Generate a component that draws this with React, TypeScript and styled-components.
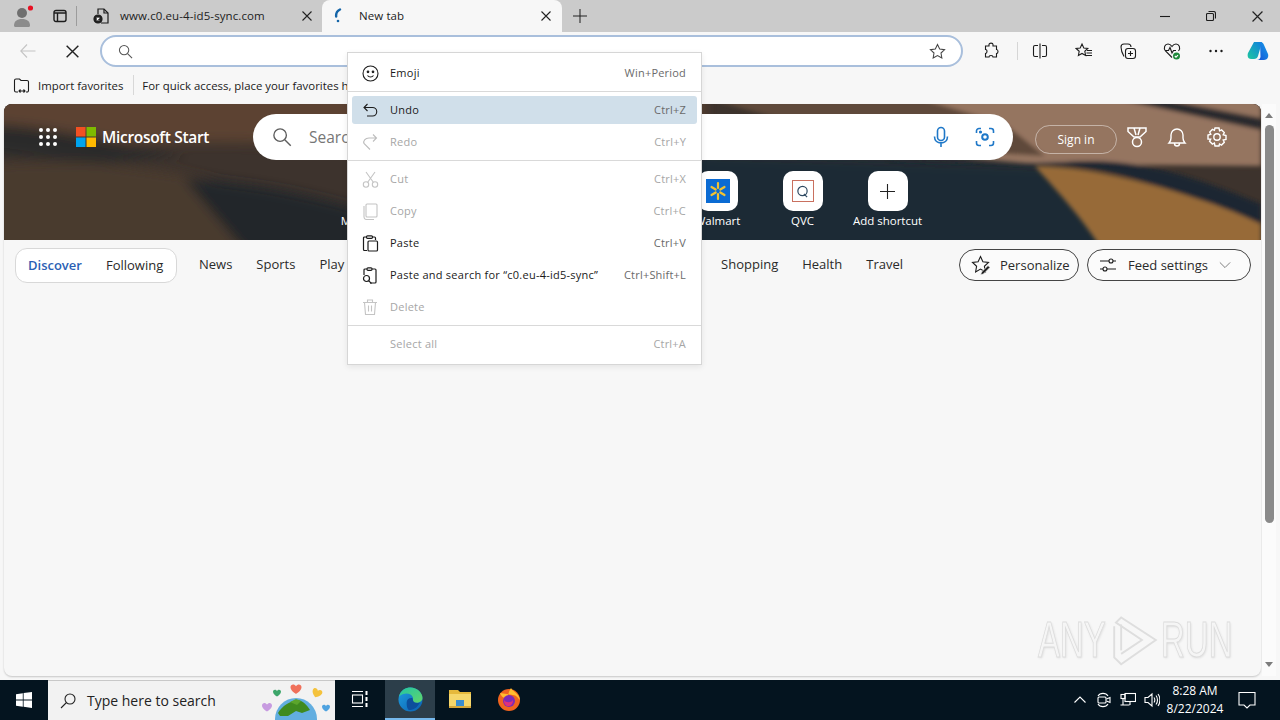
import { createGlobalStyle } from "styled-components"
import styled from "styled-components"

const Global = createGlobalStyle`
  html, body { margin: 0; padding: 0; background: #f7f7f7; }
  * { box-sizing: border-box; }
  body { font-family: "Open Sans", "Liberation Sans", sans-serif; }
`

const Screen = styled.div`
  position: relative;
  width: 1280px;
  height: 720px;
  display: flex;
  flex-direction: column;
  overflow: hidden;
  background: #f7f7f7;
  color: #1a1a1a;
`

const Glyph = styled.svg.attrs<{ $s?: number }>((p) => ({ width: p.$s ?? 16, height: p.$s ?? 16 }))<{ $s?: number; $c?: string }>`
  flex: none;
  display: block;
  color: ${(p) => p.$c ?? "#1c1c1c"};
  fill: none;
  stroke: currentColor;
  stroke-width: 1.1;
`

/* title bar */
const TabStrip = styled.div`
  height: 32px;
  flex: none;
  display: flex;
  align-items: stretch;
  background: #cbcbcb;
`

const Slot = styled.div<{ $w: number }>`
  width: ${(p) => p.$w}px;
  flex: none;
  display: flex;
  align-items: center;
  justify-content: center;
`

const StripDivider = styled.div`
  width: 1px;
  height: 20px;
  margin: 6px 7px 0 0;
  background: #9c9c9c;
`

const Tab = styled.div<{ $active?: boolean }>`
  width: ${(p) => (p.$active ? 240 : 238)}px;
  flex: none;
  display: flex;
  align-items: center;
  padding: 0 ${(p) => (p.$active ? 11 : 10)}px 1px 9px;
  font-size: 11.5px;
  letter-spacing: 0.1px;
  background: ${(p) => (p.$active ? "#f7f7f7" : "transparent")};
  border-radius: 8px 8px 0 0;
`

const TabTitle = styled.span<{ $left: number }>`
  flex: 1;
  margin-left: ${(p) => p.$left}px;
  padding-bottom: 1px;
  white-space: nowrap;
  color: #222;
`

const WindowButtons = styled.div`
  margin-left: auto;
  display: flex;
`

/* address bar */
const Toolbar = styled.div`
  height: 38px;
  flex: none;
  display: flex;
  align-items: center;
  padding-left: 6px;
  background: #f7f7f7;
`

const AddressBar = styled.div`
  width: 863px;
  height: 32px;
  margin: 0 6px 0 6px;
  flex: none;
  display: flex;
  align-items: center;
  justify-content: space-between;
  padding: 0 15px 0 16px;
  background: #fff;
  border: 2px solid #a9bfdc;
  border-radius: 16px;
`

const ToolDivider = styled.div`
  width: 1px;
  height: 18px;
  margin-left: 4px;
  background: #d6d6d6;
`

/* favorites bar */
const FavBar = styled.div`
  height: 32px;
  flex: none;
  display: flex;
  align-items: center;
  padding: 0 0 2px 13px;
  font-size: 11.4px;
  background: #f7f7f7;
  white-space: nowrap;
`

const FavImport = styled.span`
  margin-left: 8px;
  color: #222;
`

const FavDivider = styled.div`
  width: 1px;
  height: 20px;
  margin: 0 8px 0 10px;
  background: #d8d8d8;
`

/* page */
const Viewport = styled.div`
  flex: 1;
  min-height: 0;
  display: flex;
  padding: 2px 4px 4px 4px;
`

const Page = styled.div`
  width: 1257px;
  flex: none;
  display: flex;
  flex-direction: column;
  background: #f7f7f7;
  border-radius: 8px;
  box-shadow: 0 1px 2px rgba(0, 0, 0, 0.2);
  overflow: hidden;
`

const Hero = styled.div`
  position: relative;
  height: 136px;
  flex: none;
  padding-top: 10px;
  overflow: hidden;
  background: #3a3330;
`

const HeroArt = styled.svg`
  position: absolute;
  inset: 0;
  width: 100%;
  height: 100%;
`

const HeroTop = styled.div`
  position: relative;
  display: flex;
  align-items: center;
  height: 46px;
  padding-left: 34px;
`

const Brand = styled.div`
  display: flex;
  align-items: center;
  width: 177px;
  margin-left: 18px;
  flex: none;
  font-size: 15.5px;
  font-weight: 600;
  color: #fff;
  white-space: nowrap;
`

const BrandName = styled.span`
  margin-left: 6px;
  letter-spacing: -0.3px;
`

const SearchBox = styled.div`
  width: 760px;
  height: 46px;
  flex: none;
  display: flex;
  align-items: center;
  padding: 0 6px 0 19px;
  background: #fff;
  border-radius: 23px;
`

const SearchHint = styled.span`
  margin-left: 17px;
  flex: 1;
  font-size: 15.5px;
  color: #767676;
`

const SignIn = styled.div`
  width: 82px;
  height: 29px;
  margin: 4px 0 0 22px;
  flex: none;
  display: flex;
  align-items: center;
  justify-content: center;
  font-size: 12px;
  color: #fff;
  border: 1px solid rgba(255, 255, 255, 0.45);
  border-radius: 15px;
`

const HeroIcons = styled.div`
  display: flex;
`

const Shortcuts = styled.div`
  position: relative;
  display: flex;
  margin-top: 11px;
  padding-left: 331px;
`

const Shortcut = styled.div`
  width: 85px;
  flex: none;
  display: flex;
  flex-direction: column;
  align-items: center;
  font-size: 11.5px;
  color: #fff;
  white-space: nowrap;
`

const Tile = styled.div`
  width: 40px;
  height: 40px;
  display: flex;
  align-items: center;
  justify-content: center;
  margin-bottom: 2px;
  background: #fff;
  border-radius: 10px;
`

const QvcMark = styled.div`
  width: 22px;
  height: 22px;
  display: flex;
  align-items: center;
  justify-content: center;
  border: 1px solid #c9705f;
`

const NavRow = styled.div`
  display: flex;
  align-items: flex-start;
  padding: 8px 10px 0 11px;
  font-size: 13px;
  color: #2a2a2a;
`

const FeedPill = styled.div`
  width: 162px;
  height: 35px;
  flex: none;
  display: flex;
  align-items: center;
  padding-left: 12px;
  gap: 24px;
  margin-right: 22px;
  background: #fff;
  border: 1px solid #d8d8d8;
  border-radius: 12px;
`

const NavLink = styled.span<{ $on?: boolean }>`
  line-height: 33px;
  white-space: nowrap;
  margin-right: ${(p) => (p.$on === undefined ? "24px" : "0")};
  color: ${(p) => (p.$on ? "#2b5fb4" : "#2a2a2a")};
  font-weight: ${(p) => (p.$on ? 600 : 400)};
`

const NavGap = styled.div<{ $w?: number }>`
  flex: ${(p) => (p.$w ? `0 0 ${p.$w}px` : "1")};
`

const OutlineButton = styled.div<{ $w: number; $gap: number }>`
  width: ${(p) => p.$w}px;
  height: 32px;
  flex: none;
  display: flex;
  align-items: center;
  margin: 1px 0 0 8px;
  padding-left: 11px;
  gap: ${(p) => p.$gap}px;
  font-size: 13px;
  background: #fbfbfb;
  border: 1px solid #444;
  border-radius: 16px;
  white-space: nowrap;
`

const Scrollbar = styled.div`
  width: 14px;
  margin-left: 1px;
  flex: none;
  display: flex;
  flex-direction: column;
  align-items: center;
  background: #fbfbfb;
`

const Arrow = styled.div<{ $down?: boolean }>`
  width: 0;
  height: 0;
  flex: none;
  margin: ${(p) => (p.$down ? "auto 0 9px" : "9px 0 0")};
  border-left: 4px solid transparent;
  border-right: 4px solid transparent;
  border-${(p) => (p.$down ? "top" : "bottom")}: 5px solid #7c7c7c;
`

const Thumb = styled.div`
  width: 9px;
  height: 398px;
  margin-top: 7px;
  background: #8a8a8a;
  border-radius: 5px;
`

/* taskbar */
const Taskbar = styled.div`
  height: 40px;
  flex: none;
  display: flex;
  align-items: stretch;
  background: #04141f;
  color: #fff;
`

const TaskSearch = styled.div`
  width: 287px;
  flex: none;
  display: flex;
  align-items: center;
  padding-left: 12px;
  overflow: hidden;
  background: #f2f2f2;
  border-top: 1px solid #c8c8c8;
  color: #222;
  font-size: 14px;
`

const TaskSearchText = styled.span`
  margin-left: 11px;
  flex: 1;
  white-space: nowrap;
`

const TaskItem = styled.div<{ $on?: boolean; $w?: number }>`
  width: ${(p) => p.$w ?? 49}px;
  flex: none;
  display: flex;
  align-items: center;
  justify-content: center;
  background: ${(p) => (p.$on ? "#2c3e4a" : "transparent")};
  border-bottom: 2px solid ${(p) => (p.$on ? "#76b9ed" : "transparent")};
`

const Tray = styled.div`
  margin-left: auto;
  display: flex;
  align-items: center;
  padding-right: 12px;
`

const TraySlot = styled.div<{ $w: number }>`
  width: ${(p) => p.$w}px;
  flex: none;
  display: flex;
  justify-content: center;
`

const Clock = styled.div`
  width: 62px;
  flex: none;
  text-align: center;
  font-size: 12px;
  line-height: 18px;
  white-space: nowrap;
`

const Notify = styled.div`
  width: 42px;
  flex: none;
  display: flex;
  justify-content: center;
`

/* context menu */
const Menu = styled.div`
  position: absolute;
  left: 347px;
  top: 52px;
  width: 355px;
  display: flex;
  flex-direction: column;
  padding: 4px 0 2px;
  background: #fff;
  border: 1px solid #d6d6d6;
  box-shadow: 0 2px 6px rgba(0, 0, 0, 0.08);
`

const MenuGroup = styled.div`
  display: flex;
  flex-direction: column;
  &:last-child {
    padding-bottom: 2px;
  }
`

const MenuRow = styled.div<{ $off?: boolean; $hot?: boolean }>`
  height: 28px;
  margin: 2px 4px;
  flex: none;
  display: flex;
  align-items: center;
  padding: 0 11px 0 8px;
  font-size: 11px;
  border-radius: 3px;
  white-space: nowrap;
  background: ${(p) => (p.$hot ? "#d0dfea" : "transparent")};
  color: ${(p) => (p.$off ? "#a6a6a6" : "#1a1a1a")};
`

const MenuIcon = styled.div`
  width: 20px;
  flex: none;
  display: flex;
  justify-content: center;
`

const MenuLabel = styled.span`
  margin-left: 10px;
  padding-bottom: 2px;
  flex: 1;
  letter-spacing: 0.25px;
`

const MenuKeys = styled.span<{ $off?: boolean }>`
  padding-bottom: 2px;
  letter-spacing: 0.2px;
  color: ${(p) => (p.$off ? "#a6a6a6" : "#6a6a6a")};
`

const MenuLine = styled.div`
  height: 1px;
  margin: 2px 0;
  flex: none;
  background: #d9d9d9;
`

const Watermark = styled.div`
  position: absolute;
  left: 1038px;
  top: 611px;
  display: flex;
  align-items: center;
  font-family: "Liberation Sans", sans-serif;
  font-size: 50px;
  color: rgba(246, 246, 246, 0.9);
  -webkit-text-stroke: 1px #dcdcdc;
  text-shadow: 1px 1px 3px rgba(0, 0, 0, 0.12);
  pointer-events: none;
`

const WatermarkWord = styled.span<{ $w: number }>`
  width: ${(p) => p.$w}px;
  display: inline-block;
  transform: scaleX(0.66);
  transform-origin: left center;
  white-space: nowrap;
`

/* ---- drawings ---- */
const Search = ({ s = 16, c = "#444" }: { s?: number; c?: string }) => (
  <Glyph $s={s} $c={c} viewBox="0 0 16 16">
    <circle cx="6.5" cy="6.5" r="5" />
    <path d="M10.2 10.2L15 15" />
  </Glyph>
)

const CloseX = ({ s = 10, c = "#222" }: { s?: number; c?: string }) => (
  <Glyph $s={s} $c={c} viewBox="0 0 10 10">
    <path d="M.5.5l9 9M9.5.5l-9 9" />
  </Glyph>
)

const Star = () => (
  <Glyph $s={17} $c="#444" viewBox="0 0 18 18">
    <path d="M9 1.5l2.3 4.8 5.2.7-3.8 3.6.9 5.2L9 13.3l-4.6 2.5.9-5.2L1.5 7l5.2-.7z" />
  </Glyph>
)

const Avatar = () => (
  <Glyph $s={22} viewBox="0 0 22 22">
    <circle cx="11" cy="8" r="5" fill="#6f6f6f" stroke="none" />
    <path d="M3 21c0-5 3-7 8-7s8 2 8 7c0 1-2 1-3 1H6c-1 0-3 0-3-1z" fill="#8c8c8c" stroke="none" />
    <circle cx="19.5" cy="3" r="2.6" fill="#e81123" stroke="none" />
  </Glyph>
)

const TabsIcon = () => (
  <Glyph $s={14} viewBox="0 0 14 14" style={{ strokeWidth: 1.4 }}>
    <rect x="1" y="1.5" width="12" height="11" rx="2" />
    <path d="M1 4h12M4.5 4v8.5" />
  </Glyph>
)

const PageFavicon = () => (
  <Glyph $s={18} viewBox="0 0 18 18" style={{ strokeWidth: 1.2 }}>
    <path d="M5 7V2h6l4 4v10H8" />
    <path d="M11 2v4h4" />
    <circle cx="5" cy="12" r="4" fill="#222" />
    <path d="M3.7 10.7l2.6 2.6M6.3 10.7l-2.6 2.6" stroke="#fff" />
  </Glyph>
)

const Spinner = () => (
  <Glyph $s={16} $c="#1565a8" viewBox="0 0 16 16" style={{ strokeWidth: 2.4 }}>
    <path d="M9 1.500C6 3 4.800 5.500 5.200 8.500" strokeLinecap="round" />
    <circle cx="7" cy="13" r="1.300" fill="#1565a8" stroke="none" />
  </Glyph>
)

const Extensions = () => (
  <Glyph $s={18} viewBox="0 0 18 18">
    <path d="M7 2.5c0-1.8 4-1.8 4 0V4h3.5v3.5c2 0 2 4 0 4V15H11c0-2-4-2-4 0H3.5v-3.5c2-.2 2-4 0-4V4H7z" />
  </Glyph>
)

const SplitScreen = () => (
  <Glyph $s={16} viewBox="0 0 16 16">
    <path d="M8 .5v15M6 2.5H3a1.5 1.5 0 0 0-1.5 1.5v8A1.5 1.5 0 0 0 3 13.5h3M10 2.5h3A1.5 1.5 0 0 1 14.500 4v8a1.500 1.500 0 0 1-1.500 1.500h-3" />
  </Glyph>
)

const FavList = () => (
  <Glyph $s={18} viewBox="0 0 18 18">
    <path d="M7 2l1.800 4 4 .5-3 2.800.8 4.200L7 11.400 3.400 13.500l.8-4.200-3-2.800 4-.5zM12 8.500h5M11.500 11h5.500M10.500 13.500h6.500" />
  </Glyph>
)

const Collections = () => (
  <Glyph $s={18} viewBox="0 0 18 18">
    <path d="M5 14.500C3 11 2 8 2 5c0-2 1-3 3-3h4c2 0 3 1 3 3" />
    <rect x="6.500" y="6.500" width="10" height="10" rx="2.500" />
    <path d="M11.500 9v5M9 11.500h5" />
  </Glyph>
)

const Health = () => (
  <Glyph $s={18} viewBox="0 0 18 18">
    <path d="M9 15.500L2.500 9C0 5.500 2 2 5 2c2 0 3 1 4 2.500C10 3 11 2 13 2c3 0 5 3.500 2.500 7" />
    <path d="M2 8.500h3.500l1.500-3 2 5.500 1.500-2.500H13" />
    <circle cx="13.500" cy="14" r="3.500" fill="#1f8a3b" stroke="none" />
    <path d="M11.800 14l1.200 1.200 2-2" stroke="#fff" />
  </Glyph>
)

const Dots = () => (
  <Glyph $s={16} viewBox="0 0 16 16">
    <circle cx="2.500" cy="8" r="1.200" fill="#1c1c1c" stroke="none" />
    <circle cx="8" cy="8" r="1.200" fill="#1c1c1c" stroke="none" />
    <circle cx="13.500" cy="8" r="1.200" fill="#1c1c1c" stroke="none" />
  </Glyph>
)

const Copilot = () => (
  <Glyph $s={24} viewBox="0 0 24 24">
    <defs>
      <linearGradient id="cpA" x1="0" y1="1" x2="1" y2="0">
        <stop offset="0" stopColor="#1fc7a0" />
        <stop offset="1" stopColor="#0f7fe0" />
      </linearGradient>
      <linearGradient id="cpB" x1="0" y1="1" x2="1" y2="0">
        <stop offset="0" stopColor="#1550d8" />
        <stop offset="1" stopColor="#18a0e8" />
      </linearGradient>
    </defs>
    <path d="M8 3h8l-4 14c-.5 2-2 3-4 3H5C2 20 1 17 2 14z" fill="url(#cpA)" stroke="none" />
    <path d="M14 3c2 0 3.500 1 4 3l4 9c1 3-1 6-4 6h-7c2 0 3-1 3.500-3z" fill="url(#cpB)" stroke="none" />
  </Glyph>
)

const ImportFav = () => (
  <Glyph $s={17} viewBox="0 0 17 17">
    <path d="M5 15H3a1.500 1.500 0 0 1-1.500-1.500v-10A1.500 1.500 0 0 1 3 2h3.500l1.500 1.500h6A1.500 1.500 0 0 1 15.500 5v8.500A1.500 1.500 0 0 1 14 15h-1" />
    <path d="M6 14h6M7.500 12.500L6 14l1.500 1.500M10.500 12.500L12 14l-1.500 1.500" />
  </Glyph>
)

const Waffle = () => (
  <Glyph $s={20} viewBox="0 0 20 20">
    {[3, 10, 17].flatMap((y) =>
      [3, 10, 17].map((x) => <circle key={`${x}-${y}`} cx={x} cy={y} r="2" fill="#fff" stroke="none" />)
    )}
  </Glyph>
)

const MsLogo = () => (
  <Glyph $s={20} viewBox="0 0 20 20" style={{ stroke: "none" }}>
    <rect width="9.500" height="9.500" fill="#f25022" />
    <rect x="10.500" width="9.500" height="9.500" fill="#7fba00" />
    <rect y="10.500" width="9.500" height="9.500" fill="#00a4ef" />
    <rect x="10.500" y="10.500" width="9.500" height="9.500" fill="#ffb900" />
  </Glyph>
)

const Mic = () => (
  <Glyph $s={22} $c="#1f78c8" viewBox="0 0 22 22" style={{ strokeWidth: 1.6 }}>
    <rect x="7.500" y="1.500" width="7" height="13" rx="3.500" />
    <path d="M4.500 10.500c0 8.500 13 8.500 13 0M11 17.500v3.500" />
  </Glyph>
)

const VisualSearch = () => (
  <Glyph $s={20} $c="#1f78c8" viewBox="0 0 20 20" style={{ strokeWidth: 1.6 }}>
    <path d="M6 1.500H4A2.500 2.500 0 0 0 1.500 4v2M14 1.500h2A2.500 2.500 0 0 1 18.500 4v2M6 18.500H4A2.500 2.500 0 0 1 1.500 16v-2M14 18.500h2a2.500 2.500 0 0 0 2.500-2.500v-2" />
    <circle cx="10" cy="10" r="2.800" strokeWidth="2" />
    <circle cx="5.500" cy="5" r="0.800" fill="#1f78c8" />
  </Glyph>
)

const Medal = () => (
  <Glyph $s={22} $c="#fff" viewBox="0 0 22 22" style={{ strokeWidth: 1.500 }}>
    <path d="M2 2h18v3.500L14 11H8L2 5.500zM8 2l2 7M14 2l-2 7" />
    <circle cx="11" cy="16" r="4.500" />
  </Glyph>
)

const Bell = () => (
  <Glyph $s={22} $c="#fff" viewBox="0 0 22 22" style={{ strokeWidth: 1.400 }}>
    <path d="M3 17c1.500-1.500 2-3 2-5V9a6 6 0 0 1 12 0v3c0 2 .5 3.500 2 5zM8.500 17.500a2.500 2.500 0 0 0 5 0" />
  </Glyph>
)

const Gear = () => (
  <Glyph $s={22} $c="#fff" viewBox="0 0 22 22" style={{ strokeWidth: 1.400 }}>
    <path d="M9 2h4l.6 2.800 2-.9 2.700 2.700-1.100 2.200 2.800.7v4l-2.800.6 1.100 2.200-2.800 2.800-2-1.100L13 20h-4l-.6-3-2 1.100-2.800-2.800 1.100-2.200L2 13V9l2.800-.7-1.100-2.200 2.700-2.700 2 .9z" />
    <circle cx="11" cy="11" r="3.200" />
  </Glyph>
)

const Walmart = () => (
  <Glyph $s={24} viewBox="0 0 24 24" style={{ stroke: "none" }}>
    <rect width="24" height="24" fill="#0b6bd3" />
    <g stroke="#f2c230" strokeWidth="2.200" strokeLinecap="round">
      <path d="M12 4v5M12 15v5M5.500 8l4.200 2.500M14.300 13.500l4.200 2.500M18.500 8l-4.200 2.500M9.700 13.500L5.500 16" />
    </g>
  </Glyph>
)

const QvcQ = () => (
  <Glyph $s={13} $c="#2e4a62" viewBox="0 0 14 14" style={{ strokeWidth: 1.300 }}>
    <circle cx="7" cy="6.500" r="5" />
    <path d="M8.500 9.500l3.500 3.500" />
  </Glyph>
)

const Plus = ({ s = 15, c = "#222" }: { s?: number; c?: string }) => (
  <Glyph $s={s} $c={c} viewBox="0 0 15 15">
    <path d="M7.500 0v15M0 7.500h15" />
  </Glyph>
)

const StarPen = () => (
  <Glyph $s={20} viewBox="0 0 20 20">
    <path d="M9.500 1.500l2.400 5.200 5.600.7-4.100 3.900 1 5.600-4.900-2.800-4.900 2.800 1-5.600L1.500 7.400l5.600-.7z" />
    <path d="M17 10.500l2 2-6.500 6.500-3 1 1-3z" fill="#222" stroke="#fbfbfb" strokeWidth=".8" />
  </Glyph>
)

const Sliders = () => (
  <Glyph $s={18} viewBox="0 0 18 18">
    <path d="M1 5h9M14 5h3M1 13h3M8 13h9" />
    <circle cx="12" cy="5" r="2" />
    <circle cx="6" cy="13" r="2" />
  </Glyph>
)

const Chevron = () => (
  <Glyph $s={12} $c="#777" viewBox="0 0 14 14">
    <path d="M1 4l6 6 6-6" />
  </Glyph>
)

const Minimize = () => (
  <Glyph $s={10} viewBox="0 0 10 10">
    <path d="M0 5.500h10" />
  </Glyph>
)

const Restore = () => (
  <Glyph $s={10} viewBox="0 0 10 10">
    <rect x=".5" y="2.500" width="7" height="7" rx="1" />
    <path d="M2.500 .5h5a2 2 0 0 1 2 2v5" />
  </Glyph>
)

const BackArrow = () => (
  <Glyph $s={16} $c="#c4c4c4" viewBox="0 0 16 16">
    <path d="M15.500 8H.8M7 1.500L.8 8 7 14.500" />
  </Glyph>
)

const MenuSmile = () => (
  <Glyph $s={17} viewBox="0 0 17 17">
    <circle cx="8.500" cy="8.500" r="7.500" />
    <circle cx="6" cy="6.800" r=".8" fill="#1c1c1c" />
    <circle cx="11" cy="6.800" r=".8" fill="#1c1c1c" />
    <path d="M5.500 10.500c1.500 2 4.500 2 6 0" />
  </Glyph>
)

const MenuUndo = () => (
  <Glyph $s={15} viewBox="0 0 15 15">
    <path d="M4.500 1L1 4.500 4.500 8M1 4.500h8.500a4 4 0 0 1 0 8.500H4" />
  </Glyph>
)

const MenuRedo = () => (
  <Glyph $s={16} $c="#bdbdbd" viewBox="0 0 16 16">
    <path d="M11 .5L14.500 4 11 7.500M14.500 4H7C3 4 1 7 2 9.500L8 15.500" />
  </Glyph>
)

const MenuCut = () => (
  <Glyph $s={17} $c="#c4c4c4" viewBox="0 0 17 17">
    <circle cx="4" cy="13.500" r="2.700" />
    <circle cx="13" cy="13.500" r="2.700" />
    <path d="M4 1l7.500 10.500M13 1L5.500 11.500" />
  </Glyph>
)

const MenuCopy = () => (
  <Glyph $s={17} $c="#c4c4c4" viewBox="0 0 17 17">
    <rect x="4" y="1" width="11" height="13" rx="1" />
    <path d="M2 3v11c0 1.500 1 2.500 2.500 2.500H12" />
  </Glyph>
)

const MenuPaste = () => (
  <Glyph $s={17} viewBox="0 0 17 17" style={{ strokeWidth: 1.200 }}>
    <path d="M5 15.500H2.500a1 1 0 0 1-1-1V3a1 1 0 0 1 1-1H5M10 2h2.500a1 1 0 0 1 1 1v2" />
    <rect x="4.500" y=".8" width="6" height="2.500" rx="1" />
    <rect x="6" y="6" width="9.500" height="10" rx="1" />
  </Glyph>
)

const MenuPasteSearch = () => (
  <Glyph $s={17} viewBox="0 0 17 17" style={{ strokeWidth: 1.200 }}>
    <path d="M2 8V3a1 1 0 0 1 1-1h2M10 2h3a1 1 0 0 1 1 1v12a1 1 0 0 1-1 1H8" />
    <rect x="5" y=".8" width="5" height="2.500" rx="1" />
    <circle cx="4.500" cy="11.500" r="3" />
    <path d="M6.800 13.800l2.700 2.700" />
  </Glyph>
)

const MenuTrash = () => (
  <Glyph $s={16} $c="#c4c4c4" viewBox="0 0 16 16">
    <path d="M1 3.500h14M5.500 3.500V1h5v2.500M2.500 3.500l1 12h9l1-12M6.500 6.500v6M9.500 6.500v6" />
  </Glyph>
)

const WinLogo = () => (
  <Glyph $s={16} viewBox="0 0 16 16" style={{ stroke: "none" }}>
    <path d="M0 2.200l6.800-1v6.400H0zM7.600 1l8.400-1v7.600H7.600zM0 8.400h6.800v6.400l-6.800-1zM7.600 8.400H16V16l-8.400-1.200z" fill="#fff" />
  </Glyph>
)

const TaskLens = () => (
  <Glyph $s={16} $c="#222" viewBox="0 0 16 16">
    <circle cx="10" cy="6" r="5" />
    <path d="M6.500 9.500L1 15" />
  </Glyph>
)

const heartPath = "M0-2.500c1.500-2.500 5-2 5 1 0 2.500-3 5-5 6-2-1-5-3.500-5-6 0-3 3.500-3.500 5-1z"

const Doodle = () => (
  <svg width="75" height="39" viewBox="0 0 75 39" style={{ flex: "none", display: "block" }}>
    <circle cx="36" cy="38" r="21" fill="#62aee0" />
    <path d="M18 32c4-7 12-12 20-13 5 1 9 5 12 10l-8 3-6-2-8 5H20z" fill="#3f8a1f" />
    <path d="M30 21l6-3 5 2-4 4z" fill="#5ba52c" />
    <path d={heartPath} fill="#c79be0" transform="translate(7 26)" />
    <path d={heartPath} fill="#3da66a" transform="translate(17 12) scale(.8)" />
    <path d={heartPath} fill="#f0705a" transform="translate(36 8) scale(1.100)" />
    <path d={heartPath} fill="#f4c23c" transform="translate(57 12) rotate(20)" />
    <path d={heartPath} fill="#4fa3e0" transform="translate(66 27) scale(.8)" />
  </svg>
)

const TaskView = () => (
  <Glyph $s={18} $c="#fff" viewBox="0 0 18 18">
    <path d="M1 1.500h11M1 16.500h11" />
    <rect x="1.500" y="5" width="10" height="8" />
    <path d="M15.500 1v4M15.500 7v4M15.500 13v4" strokeWidth="2" />
  </Glyph>
)

const EdgeIcon = () => (
  <Glyph $s={25} viewBox="0 0 26 26" style={{ stroke: "none" }}>
    <defs>
      <linearGradient id="edgeG" x1="0" y1="0" x2="1" y2="1">
        <stop offset="0" stopColor="#22c4a5" />
        <stop offset="1" stopColor="#62d66a" />
      </linearGradient>
      <linearGradient id="edgeB" x1="0" y1="0" x2="1" y2="1">
        <stop offset="0" stopColor="#1f9fe0" />
        <stop offset="1" stopColor="#0b5fb0" />
      </linearGradient>
    </defs>
    <circle cx="13" cy="13" r="12.500" fill="url(#edgeB)" />
    <path d="M1 10C3 3 8 .5 13 .5c7 0 12.500 5.500 12.500 11 0 3-3 5-6.500 5-2.500 0-4-1-4.500-2 1-1 1.500-2 1-3.500C14 6 6 5 1 10z" fill="url(#edgeG)" />
    <path d="M9 16c0-2.500 2-4.500 5-4.500 1 0 1.500.5 1.500 2 .5 2 3 4 6.500 3 .5 0 1 0 .5.500-2 3-5 7-10 7-3 0-3.500-5-3.500-8z" fill="#0d4f9c" />
  </Glyph>
)

const FolderIcon = () => (
  <Glyph $s={24} viewBox="0 0 24 24" style={{ stroke: "none" }}>
    <path d="M1 3h9l2 2h11v3H1z" fill="#e6b93c" />
    <rect x="1" y="7" width="22" height="14" fill="#f6d76b" />
    <rect x="8" y="13" width="8" height="8" fill="#3b8ed0" />
    <rect x="1" y="19" width="22" height="2" fill="#d7a83a" />
  </Glyph>
)

const FirefoxIcon = () => (
  <Glyph $s={24} viewBox="0 0 24 24" style={{ stroke: "none" }}>
    <circle cx="12" cy="13" r="11" fill="#f0641e" />
    <path d="M3 6c1 3 3 5 6 5 3-2 2-6 5-10 1 3 8 5 9 12-2-2-4-5-7-5z" fill="#ffbd2e" />
    <circle cx="12" cy="14" r="6" fill="#7d2bb5" />
    <path d="M7 13c2 3 7 3 9 0 0 4-2 6-5 6-2 0-4-2-4-6z" fill="#e0307a" />
  </Glyph>
)

const TrayChevron = () => (
  <Glyph $s={12} $c="#fff" viewBox="0 0 12 12">
    <path d="M.5 8.500L6 3l5.500 5.500" />
  </Glyph>
)

const MeetNow = () => (
  <Glyph $s={16} $c="#fff" viewBox="0 0 16 16">
    <path d="M2 4C4 .5 10 .5 12 4M2 12c2 3.500 8 3.500 10 0" />
    <rect x="2" y="5" width="8" height="6" rx="1" />
    <path d="M10.500 7L14 5.500v5L10.500 9" />
  </Glyph>
)

const NetworkIcon = () => (
  <Glyph $s={16} $c="#fff" viewBox="0 0 16 16">
    <rect x="5" y="1.500" width="10.500" height="8" />
    <rect x="1" y="2.500" width="4" height="4" />
    <path d="M3 6.500V13M10 9.500V13M.5 13h9" />
  </Glyph>
)

const Speaker = () => (
  <Glyph $s={16} $c="#fff" viewBox="0 0 16 16">
    <path d="M1 5.500h3L8 2v12L4 10.500H1zM10 5.500c1 1.500 1 3.500 0 5M12 3.500c2 2.500 2 6.500 0 9M14 2c2.500 3 2.500 9 0 12" />
  </Glyph>
)

const Bubble = () => (
  <Glyph $s={18} $c="#fff" viewBox="0 0 18 18">
    <path d="M1 1.500h16v12.500h-5l-3 3-3-3H1z" />
  </Glyph>
)

const PlayMark = () => (
  <Glyph $s={52} $c="#dedede" viewBox="0 0 60 60" style={{ strokeWidth: 2.200 }}>
    <path d="M6 14v36l8 8 40-28L14 4 8 10l30 20-24 16" />
    <path d="M14 12v30" />
  </Glyph>
)

const shortcuts = [
  { label: "Microsoft 365" },
  { label: "" },
  { label: "" },
  { label: "" },
  { label: "Walmart", icon: <Walmart /> },
  { label: "QVC", icon: <QvcMark><QvcQ /></QvcMark> },
  { label: "Add shortcut", icon: <Plus /> },
]

const menuGroups = [
  [{ icon: <MenuSmile />, label: "Emoji", keys: "Win+Period" }],
  [
    { icon: <MenuUndo />, label: "Undo", keys: "Ctrl+Z", hot: true },
    { icon: <MenuRedo />, label: "Redo", keys: "Ctrl+Y", off: true },
  ],
  [
    { icon: <MenuCut />, label: "Cut", keys: "Ctrl+X", off: true },
    { icon: <MenuCopy />, label: "Copy", keys: "Ctrl+C", off: true },
    { icon: <MenuPaste />, label: "Paste", keys: "Ctrl+V" },
    { icon: <MenuPasteSearch />, label: "Paste and search for “c0.eu-4-id5-sync”", keys: "Ctrl+Shift+L" },
    { icon: <MenuTrash />, label: "Delete", keys: "", off: true },
  ],
  [{ icon: null, label: "Select all", keys: "Ctrl+A", off: true }],
]

function App() {
  return (
    <Screen>
      <Global />
      <TabStrip>
        <Slot $w={44}><Avatar /></Slot>
        <Slot $w={32}><TabsIcon /></Slot>
        <StripDivider />
        <Tab>
          <PageFavicon />
          <TabTitle $left={9}>www.c0.eu-4-id5-sync.com</TabTitle>
          <CloseX />
        </Tab>
        <Tab $active>
          <Spinner />
          <TabTitle $left={12}>New tab</TabTitle>
          <CloseX />
        </Tab>
        <Slot $w={36}><Plus s={14} /></Slot>
        <WindowButtons>
          <Slot $w={47}><Minimize /></Slot>
          <Slot $w={46}><Restore /></Slot>
          <Slot $w={46}><CloseX s={11} /></Slot>
        </WindowButtons>
      </TabStrip>

      <Toolbar>
        <Slot $w={44}><BackArrow /></Slot>
        <Slot $w={44}><CloseX s={13} /></Slot>
        <AddressBar>
          <Search s={15} c="#555" />
          <Star />
        </AddressBar>
        <Slot $w={44}><Extensions /></Slot>
        <ToolDivider />
        <Slot $w={44}><SplitScreen /></Slot>
        <Slot $w={44}><FavList /></Slot>
        <Slot $w={44}><Collections /></Slot>
        <Slot $w={44}><Health /></Slot>
        <Slot $w={44}><Dots /></Slot>
        <Slot $w={40}><Copilot /></Slot>
      </Toolbar>

      <FavBar>
        <ImportFav />
        <FavImport>Import favorites</FavImport>
        <FavDivider />
        <span>For quick access, place your favorites here on the favorites bar.</span>
      </FavBar>

      <Viewport>
        <Page>
          <Hero>
            <HeroArt viewBox="0 0 1256 136" preserveAspectRatio="none">
              <defs>
                <filter id="soft" x="-5%" y="-20%" width="110%" height="140%">
                  <feGaussianBlur stdDeviation="6" />
                </filter>
                <filter id="crisp" x="-5%" y="-20%" width="110%" height="140%">
                  <feGaussianBlur stdDeviation="2" />
                </filter>
              </defs>
              <rect width="1256" height="136" fill="#3d332d" />
              <g filter="url(#soft)">
                <path d="M-20-20H700V50C500 60 300 30 120 40L-20 30z" fill="#5b4230" />
                <path d="M-20 20C40 20 90 35 180 50L100 60-20 50z" fill="#2a2a2a" />
                <path d="M-20 60C100 50 200 70 300 100L400 160H-20z" fill="#4a3a2e" />
                <path d="M180 75C300 80 420 120 520 170H260z" fill="#23272b" />
                <path d="M600 45L1060 60 1120 160H560z" fill="#1f2a36" />
              </g>
              <g filter="url(#crisp)">
                <path d="M700-10H1256V62L1040 60C930 55 820 30 700-10z" fill="#957560" />
                <path d="M690-10C800 25 900 45 1040 52L1000 20 900-10z" fill="#5e4a3a" />
                <path d="M1030 62C1100 62 1180 90 1256 115V150H1100C1075 110 1050 85 1030 62z" fill="#976a38" />
                <path d="M880 56C960 62 1060 54 1120 72 1170 87 1220 102 1256 120V100C1200 78 1140 52 1060 58 1000 62 940 54 880 56z" fill="#1b2530" />
                <path d="M1130-10L1256 14V26L1090-10z" fill="#2b2b2d" />
              </g>
            </HeroArt>
            <HeroTop>
              <Waffle />
              <Brand>
                <MsLogo />
                <BrandName>Microsoft Start</BrandName>
              </Brand>
              <SearchBox>
                <Search s={20} c="#5e5e5e" />
                <SearchHint>Search the web</SearchHint>
                <Slot $w={44}><Mic /></Slot>
                <Slot $w={44}><VisualSearch /></Slot>
              </SearchBox>
              <SignIn>Sign in</SignIn>
              <HeroIcons>
                <Slot $w={40}><Medal /></Slot>
                <Slot $w={40}><Bell /></Slot>
                <Slot $w={40}><Gear /></Slot>
              </HeroIcons>
            </HeroTop>
            <Shortcuts>
              {shortcuts.map((s, i) => (
                <Shortcut key={i}>
                  <Tile>{s.icon}</Tile>
                  {s.label || "\u00a0"}
                </Shortcut>
              ))}
            </Shortcuts>
          </Hero>

          <NavRow>
            <FeedPill>
              <NavLink $on>Discover</NavLink>
              <NavLink $on={false}>Following</NavLink>
            </FeedPill>
            <NavLink>News</NavLink>
            <NavLink>Sports</NavLink>
            <NavLink>Play</NavLink>
            <NavGap />
            <NavLink>Shopping</NavLink>
            <NavLink>Health</NavLink>
            <NavLink>Travel</NavLink>
            <NavGap $w={24} />
            <OutlineButton $w={120} $gap={9}>
              <StarPen />
              Personalize
            </OutlineButton>
            <OutlineButton $w={164} $gap={11}>
              <Sliders />
              Feed settings
              <Chevron />
            </OutlineButton>
          </NavRow>
        </Page>
        <Scrollbar>
          <Arrow />
          <Thumb />
          <Arrow $down />
        </Scrollbar>
      </Viewport>

      <Taskbar>
        <Slot $w={48}><WinLogo /></Slot>
        <TaskSearch>
          <TaskLens />
          <TaskSearchText>Type here to search</TaskSearchText>
          <Doodle />
        </TaskSearch>
        <TaskItem $w={50}><TaskView /></TaskItem>
        <TaskItem $on $w={50}><EdgeIcon /></TaskItem>
        <TaskItem><FolderIcon /></TaskItem>
        <TaskItem><FirefoxIcon /></TaskItem>
        <Tray>
          <TraySlot $w={24}><TrayChevron /></TraySlot>
          <TraySlot $w={24}><MeetNow /></TraySlot>
          <TraySlot $w={24}><NetworkIcon /></TraySlot>
          <TraySlot $w={24}><Speaker /></TraySlot>
          <Clock>
            8:28 AM
            <br />
            8/22/2024
          </Clock>
          <Notify><Bubble /></Notify>
        </Tray>
      </Taskbar>

      <Menu>
        {menuGroups.map((group, g) => (
          <MenuGroup key={g}>
            {g > 0 && <MenuLine />}
            {group.map((item) => (
              <MenuRow key={item.label} $off={"off" in item && item.off} $hot={"hot" in item && item.hot}>
                <MenuIcon>{item.icon}</MenuIcon>
                <MenuLabel>{item.label}</MenuLabel>
                <MenuKeys $off={"off" in item && item.off}>{item.keys}</MenuKeys>
              </MenuRow>
            ))}
          </MenuGroup>
        ))}
      </Menu>

      <Watermark>
        <WatermarkWord $w={71}>ANY</WatermarkWord>
        <PlayMark />
        <WatermarkWord $w={67}>RUN</WatermarkWord>
      </Watermark>
    </Screen>
  )
}

export default App
